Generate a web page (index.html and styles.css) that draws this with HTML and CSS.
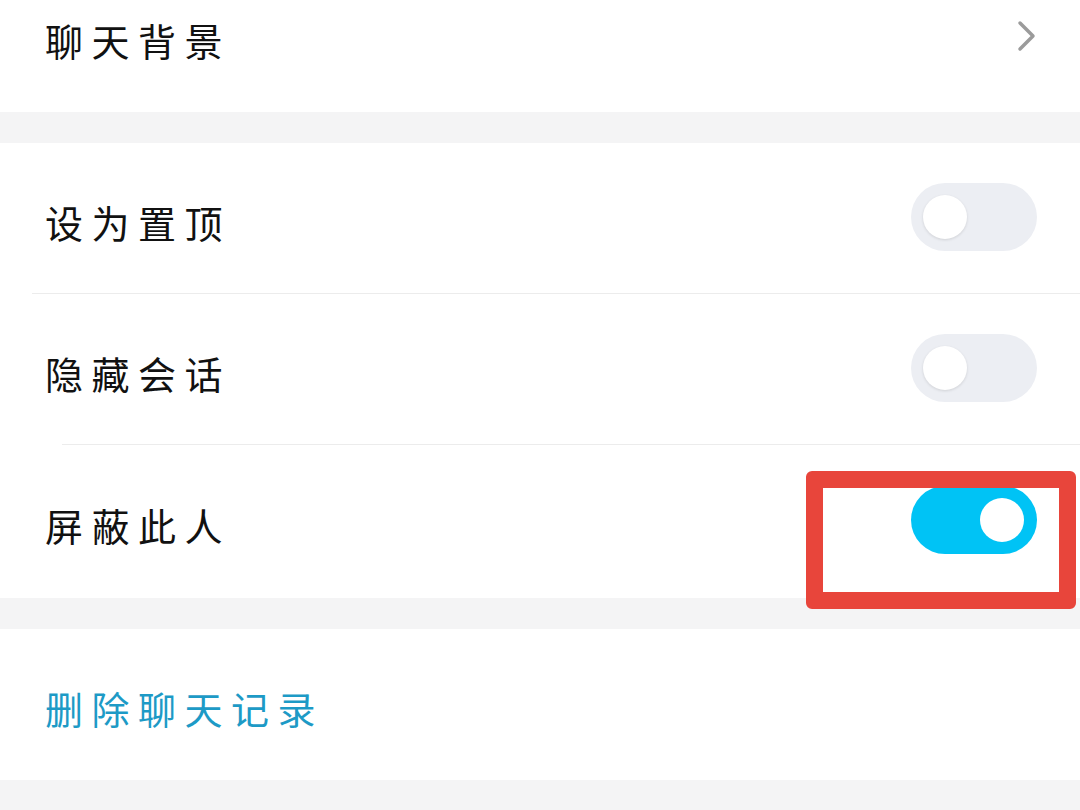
FILE: index.html
```html
<!DOCTYPE html>
<html lang="zh-CN">
<head>
    <meta charset="UTF-8">
    <meta name="viewport" content="width=device-width, initial-scale=1.0">
    <title>聊天设置</title>
    <link rel="stylesheet" href="styles.css">
</head>
<body>
    <div class="page">
        <div class="group group-first">
            <div class="row">
                <span class="label">聊天背景</span>
                <svg class="chevron" width="22" height="32" viewBox="0 0 22 32">
                    <path d="M4 3 L17 16 L4 29" fill="none" stroke="#9b9b9b" stroke-width="3.5" stroke-linecap="round" stroke-linejoin="round"/>
                </svg>
            </div>
        </div>

        <div class="group">
            <div class="row divided">
                <span class="label">设为置顶</span>
                <div class="switch"><div class="knob"></div></div>
            </div>
            <div class="row divided inset">
                <span class="label">隐藏会话</span>
                <div class="switch"><div class="knob"></div></div>
            </div>
            <div class="row tall">
                <span class="label">屏蔽此人</span>
                <div class="switch on"><div class="knob"></div></div>
                <div class="highlight"></div>
            </div>
        </div>

        <div class="group">
            <div class="row">
                <span class="label danger">删除聊天记录</span>
            </div>
        </div>
    </div>
</body>
</html>
```

FILE: styles.css
```css
* {
    box-sizing: border-box;
}
body, html {
    margin: 0;
    padding: 0;
    height: 100%;
    overflow: hidden;
    background-color: #f4f4f5;
    font-family: "Noto Sans CJK SC", "Noto Sans", sans-serif;
}
.page {
    display: flex;
    flex-direction: column;
    gap: 31px;
}
.group {
    background-color: #fff;
}
.group-first {
    margin-top: -39px;
}
.row {
    position: relative;
    height: 151px;
    display: flex;
    align-items: center;
    justify-content: space-between;
    padding: 6px 43px 0 45px;
}
.row.tall {
    height: 153px;
}
.divided::after {
    content: "";
    position: absolute;
    left: 32px;
    right: 0;
    bottom: 0;
    height: 1px;
    background-color: #ececec;
}
.inset::after {
    left: 62px;
}
.label {
    font-size: 38px;
    letter-spacing: 8.5px;
    color: #111;
}
.label.danger {
    color: #1d9ac6;
}
.chevron {
    margin-right: -1px;
    margin-top: -8px;
}
.switch {
    width: 126px;
    height: 68px;
    border-radius: 34px;
    background-color: #eceef3;
    display: flex;
    align-items: center;
    padding: 0 12px;
    margin-top: -10px;
}
.switch .knob {
    width: 44px;
    height: 44px;
    border-radius: 50%;
    background-color: #fff;
    box-shadow: 0 1px 3px rgba(0, 0, 0, 0.12);
}
.switch.on {
    background-color: #00c3f5;
    justify-content: flex-end;
    padding: 0 13px;
}
.switch.on .knob {
    box-shadow: none;
}
.highlight {
    position: absolute;
    top: 26px;
    right: 4px;
    width: 270px;
    height: 138px;
    border: 17px solid #e8453b;
    border-radius: 6px;
}
```
